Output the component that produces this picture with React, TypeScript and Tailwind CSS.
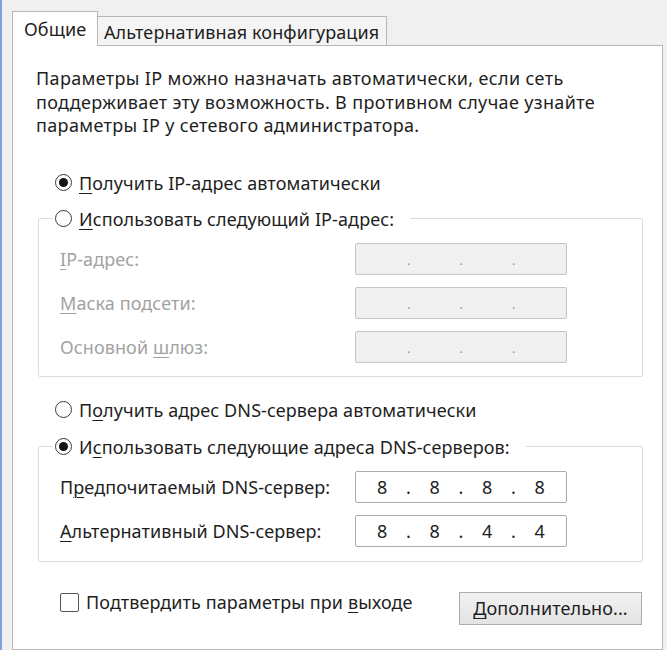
import React from "react"

const Radio = ({ checked }: { checked?: boolean }) => (
  <span className="w-[17px] h-[17px] rounded-full border-[1.5px] border-[#3a3a3a] bg-white flex items-center justify-center shrink-0">
    {checked && <span className="w-[9px] h-[9px] rounded-full bg-[#141414]" />}
  </span>
)

const U = ({ children }: { children: React.ReactNode }) => (
  <span className="underline underline-offset-[3px] decoration-1">{children}</span>
)

interface IpBoxProps {
  values?: string[]
  disabled?: boolean
}

const IpBox: React.FC<IpBoxProps> = ({ values = ["", "", "", ""], disabled }) => (
  <div
    className={`w-[212px] h-[32px] rounded-[2px] border flex items-center tracking-normal ${
      disabled ? "bg-[#f0f0f0] border-[#c4c4c4] text-[#8c8c8c]" : "bg-white border-[#acacac] text-[#1e1e1e]"
    }`}
  >
    {values.map((v, i) => (
      <React.Fragment key={i}>
        <span className="flex-1 text-center text-[18px]">{v}</span>
        {i < 3 && (
          <span className={`w-0 flex justify-center ${disabled ? "text-[12px] pt-[4px]" : "text-[18px]"}`}>.</span>
        )}
      </React.Fragment>
    ))}
  </div>
)

const Row = ({ label, disabled, values }: { label: React.ReactNode; disabled?: boolean; values?: string[] }) => (
  <div className="flex items-center h-[32px]">
    <div className={`w-[316px] pl-[21px] whitespace-nowrap ${disabled ? "text-[#a2a2a2]" : ""}`}>{label}</div>
    <IpBox disabled={disabled} values={values} />
  </div>
)

export default function App() {
  return (
    <div className="w-[667px] h-[650px] overflow-hidden bg-[#f0f0f0] flex font-['Noto_Sans',sans-serif] text-[18px] tracking-[0.1px] leading-[24px] text-[#1e1e1e]">
      <div className="w-[2px] bg-[#7ea5d6] shrink-0" />
      <div className="flex-1 pl-[10px] pr-[4px] pt-[11px] flex flex-col">
        {/* tabs */}
        <div className="flex items-end h-[35px] relative z-10">
          <div className="w-[86px] h-[35px] bg-white border border-b-0 border-[#b7b7b7] pl-[11px] pt-[5px]">Общие</div>
          <div className="h-[30px] bg-[#f4f4f4] border border-l-0 border-[#b7b7b7] pl-[6px] pr-[7px] pt-[3px] whitespace-nowrap">
            Альтернативная конфигурация
          </div>
        </div>

        <div className="-mt-px flex-1 bg-white border border-[#b7b7b7] flex flex-col">
          <p className="ml-[23px] mt-[21px] leading-[23.5px] tracking-[0.35px] whitespace-nowrap">
            Параметры IP можно назначать автоматически, если сеть
            <br />
            поддерживает эту возможность. В противном случае узнайте
            <br />
            параметры IP у сетевого администратора.
          </p>

          <div className="ml-[42px] mt-[33px] h-[24px] flex items-center gap-[7px]">
            <Radio checked />
            <span>
              <U>П</U>олучить IP-адрес автоматически
            </span>
          </div>

          <fieldset className="ml-[25px] mr-[19px] mt-[12px] border border-[#dcdcdc] rounded-[2px] pt-[12px] pb-[13px] flex flex-col gap-[12px]">
            <legend className="ml-[14px] pl-[2px] pr-[16px] h-[24px] flex items-center gap-[7px]">
              <Radio />
              <span>
                <U>И</U>спользовать следующий IP-адрес:
              </span>
            </legend>
            <Row disabled label={<><U>I</U>P-адрес:</>} />
            <Row disabled label={<><U>М</U>аска подсети:</>} />
            <Row disabled label={<>Основной <U>ш</U>люз:</>} />
          </fieldset>

          <div className="ml-[42px] mt-[21px] h-[24px] flex items-center gap-[7px]">
            <Radio />
            <span>
              П<U>о</U>лучить адрес DNS-сервера автоматически
            </span>
          </div>

          <fieldset className="ml-[25px] mr-[19px] mt-[13px] border border-[#dcdcdc] rounded-[2px] pt-[12px] pb-[14px] flex flex-col gap-[12px]">
            <legend className="ml-[14px] pl-[2px] pr-[16px] h-[24px] flex items-center gap-[7px]">
              <Radio checked />
              <span>
                И<U>с</U>пользовать следующие адреса DNS-серверов:
              </span>
            </legend>
            <Row label={<>П<U>р</U>едпочитаемый DNS-сервер:</>} values={["8", "8", "8", "8"]} />
            <Row label={<><U>А</U>льтернативный DNS-сервер:</>} values={["8", "8", "4", "4"]} />
          </fieldset>

          <div className="mt-[30px] flex items-start">
            <div className="ml-[47px] mt-[1px] h-[19px] flex items-center gap-[7px]">
              <span className="w-[19px] h-[19px] border-[1.5px] border-[#555555] rounded-[2px] bg-white shrink-0" />
              <span className="whitespace-nowrap">
                Подтвердить параметры при <U>в</U>ыходе
              </span>
            </div>
            <button className="ml-auto mr-[20px] w-[183px] h-[33px] border border-[#adadad] bg-gradient-to-b from-[#f2f2f2] to-[#e3e3e3]">
              <U>Д</U>ополнительно...
            </button>
          </div>
        </div>
      </div>
    </div>
  )
}
